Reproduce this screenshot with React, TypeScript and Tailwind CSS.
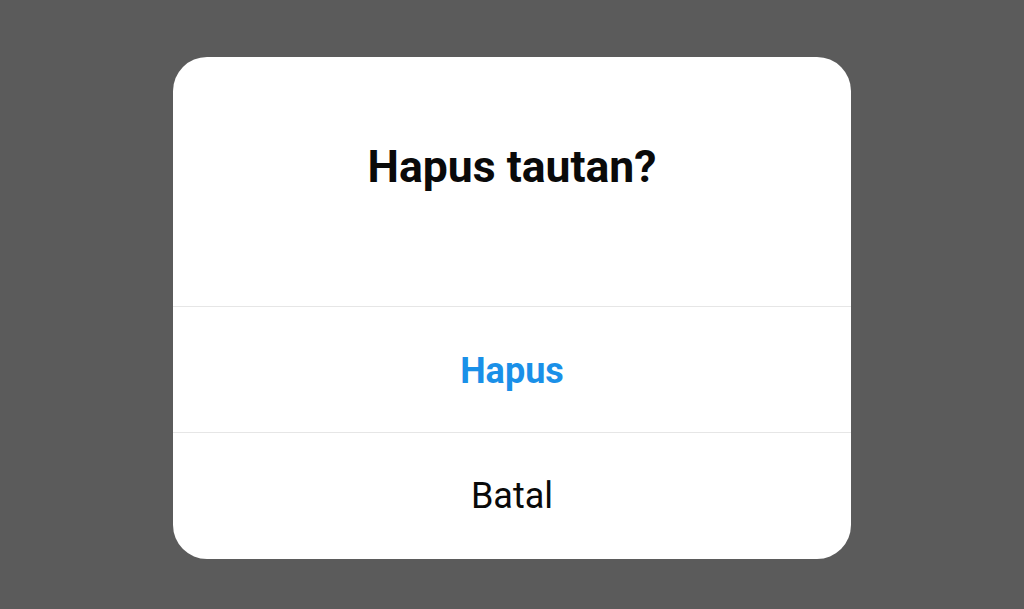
export default function App() {
  return (
    <div className="w-[1024px] h-[609px] bg-[#5b5b5b] flex items-center justify-center" style={{ fontFamily: 'Roboto, "Noto Sans", sans-serif' }}>
      <div className="w-[678px] h-[502px] bg-white rounded-[34px] flex flex-col overflow-hidden mt-[7px]">
        <div className="h-[250px] flex justify-center pt-[80px] border-b border-[#e6e6e6]">
          <h1 className="text-[44.5px] leading-[60px] font-bold text-[#0a0a0a]">Hapus tautan?</h1>
        </div>
        <button className="h-[126px] flex items-center justify-center pt-[3px] border-b border-[#e6e6e6] text-[36px] font-bold text-[#1a90e8]">
          Hapus
        </button>
        <button className="flex-1 flex items-center justify-center text-[36px] text-[#0a0a0a]">
          Batal
        </button>
      </div>
    </div>
  )
}
